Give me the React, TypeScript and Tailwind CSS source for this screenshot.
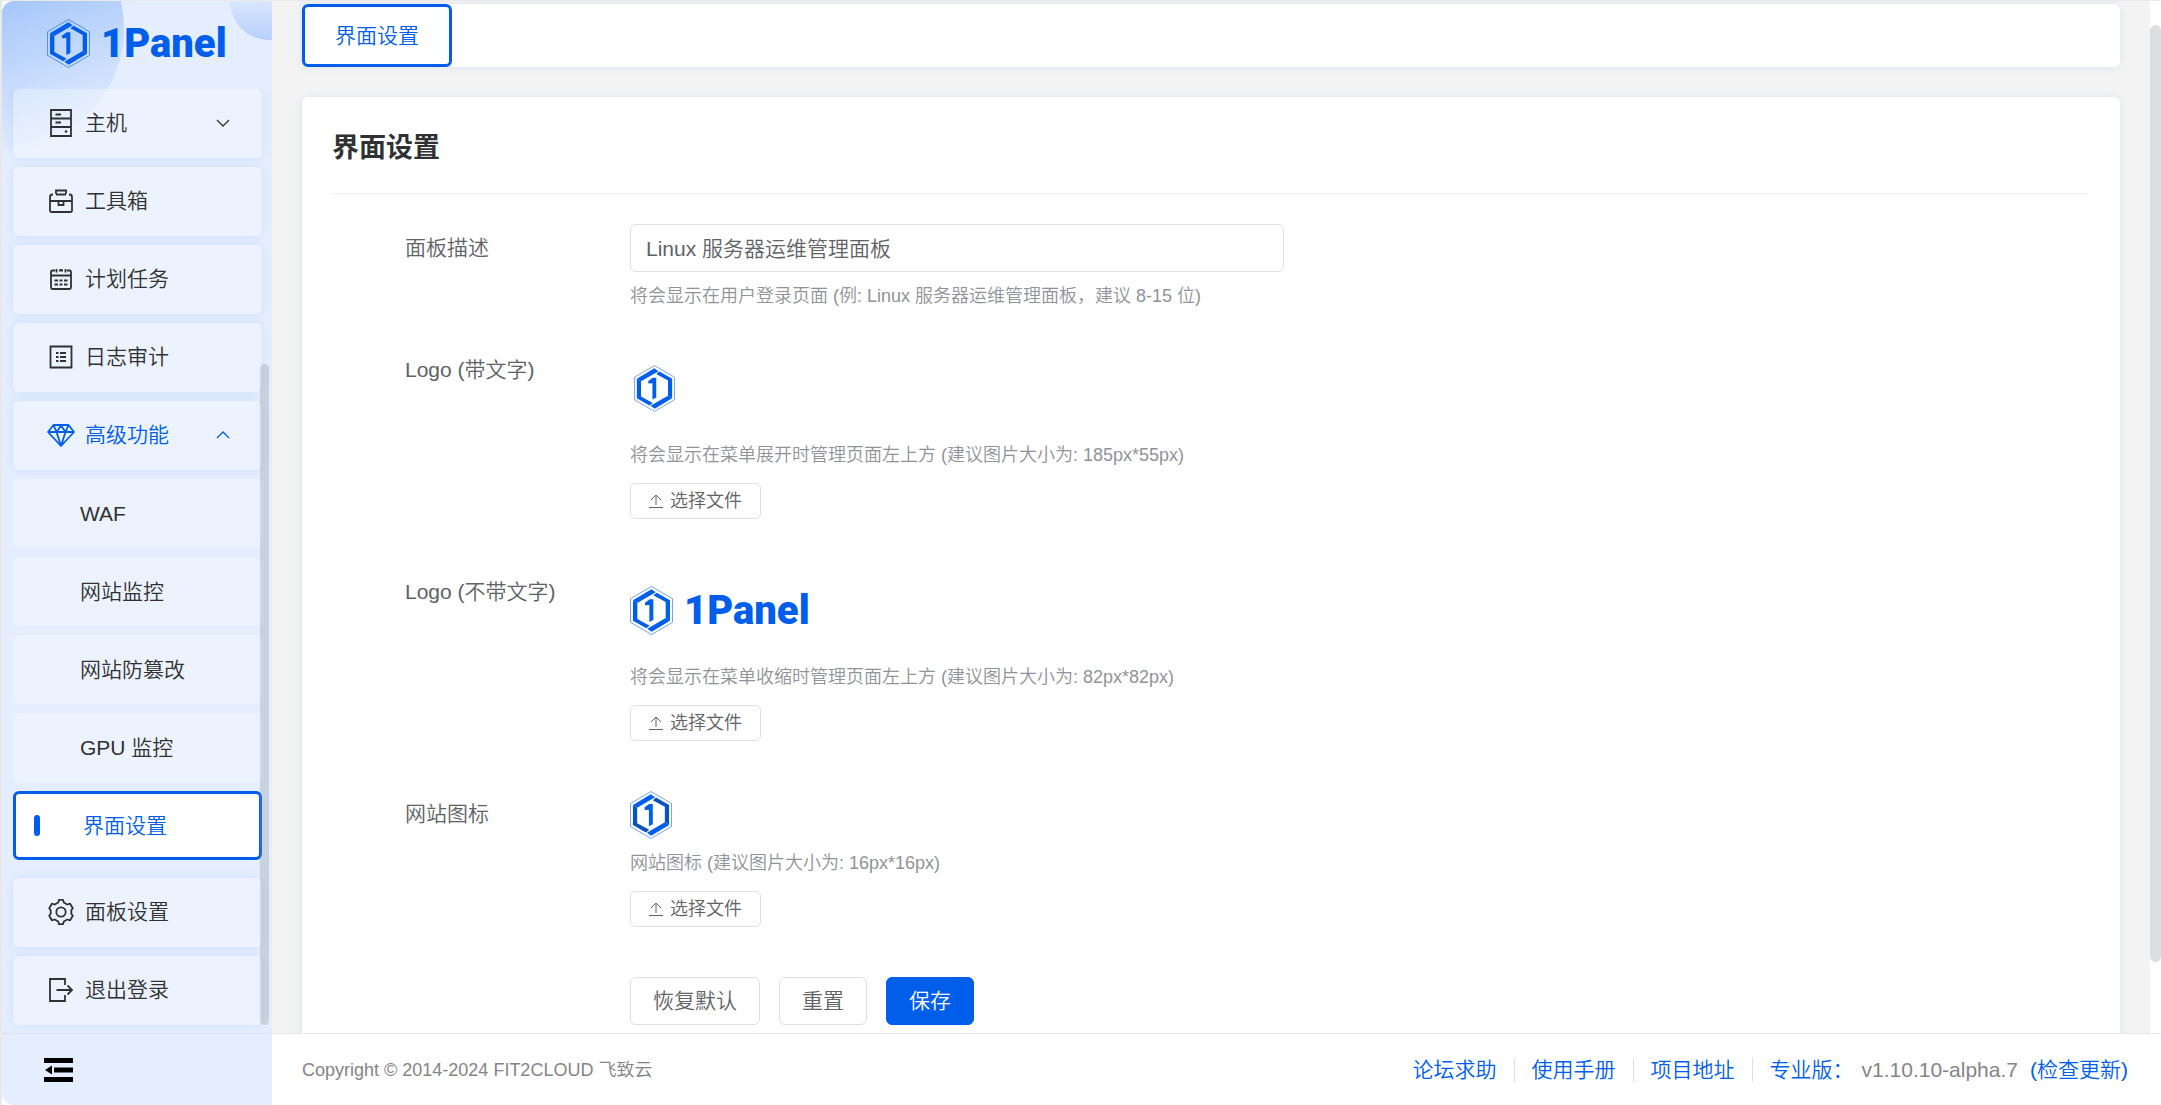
import { useRef, useState } from "react";
import type { ReactNode } from "react";


function Hexmark(props:{className:string, shaded?:boolean}){
    const dark = props.shaded ? "#0a53bd" : "#005eeb";
    return(
        <svg viewBox="0 0 129 147" className={props.className} aria-hidden="true">
            <path d="M64.5 1.5 127.5 38v71L64.5 145.500 1.500 109V38Z" fill="none" stroke="#005eeb" strokeOpacity="0.7" strokeWidth="2.400"/>
            <path d="M9 43v61l40 23 10-8-37-20V51Z" fill={dark}/>
            <path d="M9 43 64 10l13 9-55 32Z" fill="#005eeb"/>
            <path d="M120 104V43L80 20l-10 8 37 20v48Z" fill={dark}/>
            <path d="M120 104 65 137l-13-9 55-32Z" fill="#005eeb"/>
            <path d="M70 40v62l-12 6V57l-13 1v-8l14-10Z" fill="#005eeb"/>
        </svg>
    )
}

function Logo(){
    return(
        <div className="flex items-center gap-[11px] text-[#005eeb]">
            <Hexmark className="h-[49px] w-[43px] flex-none"/>
            <span className="font-['Roboto',sans-serif] text-[40px] leading-[49px] font-black">1Panel</span>
        </div>
    )
}

function Icon(props:{children:ReactNode}){
    return(
        <svg viewBox="0 0 28 28" className="h-7 w-7 flex-none" fill="none" stroke="currentColor" strokeWidth="1.800" aria-hidden="true">
            {props.children}
        </svg>
    )
}

const icons = {
    host: <Icon><path d="M4 1h20v26H4ZM4 9.500h20M4 18h20M8.500 5.500h5.500M8.500 13.500h5.500"/><circle cx="19" cy="22.500" r="1.300" fill="currentColor" stroke="none"/></Icon>,
    toolbox: <Icon><path d="M9 7V3.500h10V7M6 7.500H5.500a2.500 2.500 0 0 0-2.500 2.500v13.500a1.500 1.500 0 0 0 1.500 1.500h19a1.500 1.500 0 0 0 1.500-1.500V10a2.500 2.500 0 0 0-2.500-2.500H22M9 7.500h10M3 14h22M11.500 14v4h5v-4"/></Icon>,
    cron: <Icon><path d="M8 5.500H5.500a1.500 1.500 0 0 0-1.500 1.500v15.500a1.500 1.500 0 0 0 1.500 1.500h17a1.500 1.500 0 0 0 1.500-1.500V7a1.500 1.500 0 0 0-1.500-1.500H20M4 10.500h20M9.500 4v3.500M18.500 4v3.500M12 5.500h4M14 4v2"/><path d="M7.500 15.500h3.500M12.500 15.500h3M17 15.500h3.500M7.500 19.500h3.500M12.500 19.500h3M17 19.500h3.500"/></Icon>,
    log: <Icon><path d="M3.500 3.500h21v21h-21ZM9 10h2.500M9 14h2.500M9 18h2.500M13 10h6M13 14h6M13 18h6"/></Icon>,
    pro: <Icon><path d="M6.500 4h15l5.500 7L14 25 1 11ZM1 11h26M6.500 4l3 7L14 4.500 18.500 11l3-7M9.500 11 14 25l4.500-14" strokeLinejoin="round"/></Icon>,
    setting: <Icon><path d="M11.200 4.500 12 1.800h4l.8 2.700 3.400 2 2.900-.8 2.700 4.600-1.500 2v3.400l1.500 2-2.700 4.600-2.900-.8-3.400 2-.8 2.700h-4l-.8-2.700-3.400-2-2.900.8-2.700-4.600 1.500-2v-3.400l-1.500-2 2.700-4.600 2.900.8Z" strokeLinejoin="round"/><circle cx="14" cy="14" r="4.700"/></Icon>,
    logout: <Icon><path d="M18 9V3H3v22h15v-6M9.500 14H25M20.500 9.500 25 14l-4.500 4.500"/></Icon>,
};

function Arrow(props:{up?:boolean}){
    return(
        <svg viewBox="0 0 14 8" className="ml-auto h-2 w-[14px]" fill="none" stroke="currentColor" strokeWidth="1.300" aria-hidden="true">
            <path d={props.up ? "M1 7 7 1l6 6" : "M1 1l6 6 6-6"}/>
        </svg>
    )
}

const topmenu = [
    {name:"主机", icon:icons.host, arrow:"down"},
    {name:"工具箱", icon:icons.toolbox},
    {name:"计划任务", icon:icons.cron},
    {name:"日志审计", icon:icons.log},
    {name:"高级功能", icon:icons.pro, arrow:"up"},
];

const submenu = ["WAF", "网站监控", "网站防篡改", "GPU 监控", "界面设置"];

const bottommenu = [
    {name:"面板设置", icon:icons.setting},
    {name:"退出登录", icon:icons.logout},
];

function Menuitem(props:{name:string, icon:ReactNode, arrow?:string}){
    return(
        <a href="#" className={(props.arrow=="up" ? "text-[#005eeb] " : "text-[#303133] ")+"flex h-[69px] flex-none items-center gap-[10px] rounded-md bg-white/30 pr-8 pb-[2px] pl-[34px] shadow-[0_0_10px_rgba(0,94,235,0.1)]"}>
            {props.icon}
            {props.name}
            {props.arrow && <Arrow up={props.arrow=="up"}/>}
        </a>
    )
}

function Sidebar(){
    const [Selected,setSelected]=useState<string>("界面设置");

    return(
        <aside className="relative flex w-[270px] flex-none flex-col overflow-hidden bg-[#e5eefe]">
            <div className="absolute -top-[96px] -left-[124px] h-[246px] w-[246px] rounded-full bg-linear-160 from-[#a3c5fa] from-40% to-[#e3edfe] to-90%"></div>
            <div className="absolute -top-[38px] left-[228px] h-[77px] w-[77px] rounded-full bg-linear-to-b from-[#dfeafe] from-40% to-[#b8d0fa]"></div>

            <div className="relative flex h-[88px] flex-none items-center pb-[4px] pl-[45px]">
                <Logo/>
            </div>

            <nav className="relative flex min-h-0 flex-1 flex-col gap-[9px] overflow-hidden pr-[10px] pl-[11px]">
                {topmenu.map(item=>(
                    <Menuitem key={item.name} name={item.name} icon={item.icon} arrow={item.arrow}/>
                ))}
                {submenu.map(name=>(
                    <a href="#" key={name} onClick={()=>{setSelected(name);}}
                        className={(Selected==name ? "mb-[9px] border-3 border-[#005eeb] bg-white pl-[18px] text-[#005eeb] " : "bg-white/30 pl-[67px] text-[#303133] ")+"flex h-[69px] flex-none items-center rounded-md"}>
                        {Selected==name && <span className="mr-[43px] h-[21px] w-[6px] rounded-full bg-[#005eeb]"></span>}
                        {name}
                    </a>
                ))}
                {bottommenu.map(item=>(
                    <Menuitem key={item.name} name={item.name} icon={item.icon}/>
                ))}
                <div className="absolute right-[3px] bottom-2 h-[661px] w-[9px] rounded-full bg-[#909399]/30"></div>
            </nav>

            <div className="relative flex h-[72px] flex-none items-center border-t border-[#dde3ed] pl-[42px]">
                <button type="button" aria-label="收起菜单">
                    <svg viewBox="0 0 29 24" className="h-6 w-[29px]" fill="#000" aria-hidden="true">
                        <path d="M0 0h29v5H0ZM10 9.500h19v5H10ZM0 19h29v5H0ZM8 7.500v9L1 12Z"/>
                    </svg>
                </button>
            </div>
        </aside>
    )
}

function Help(props:{children:ReactNode}){
    return <p className="mt-3 text-[18px] leading-6 text-[#909399]">{props.children}</p>
}

function Upload(props:{label:string}){
    const inputRef = useRef<HTMLInputElement>(null!);

    return(
        <>
        <input ref={inputRef} hidden type="file" accept="image/*" aria-label={props.label}></input>
        <button type="button" onClick={()=>{inputRef.current.click();}}
            className="mt-4 flex h-9 w-[131px] items-center justify-center gap-[7px] rounded-[5px] border border-[#dcdfe6] text-[18px] text-[#606266]">
            <svg viewBox="0 0 14 14" className="h-[14px] w-[14px]" fill="none" stroke="currentColor" aria-hidden="true">
                <path d="M0 13.500h14M7 11V1M2 6l5-5 5 5"/>
            </svg>
            选择文件
        </button>
        </>
    )
}

function Row(props:{label:string, htmlFor?:string, className?:string, children:ReactNode}){
    return(
        <div className={"flex "+(props.className ?? "mb-[49px]")}>
            {props.htmlFor
                ? <label htmlFor={props.htmlFor} className="w-[225px] flex-none leading-[48px] text-[#606266]">{props.label}</label>
                : <div className="w-[225px] flex-none leading-[48px] text-[#606266]">{props.label}</div>}
            <div className="min-w-0 flex-1">{props.children}</div>
        </div>
    )
}

function Settingform(){
    const [Title,setTitle]=useState<string>("Linux 服务器运维管理面板");

    return(
        <form className="pt-[30px] pl-[73px]" onSubmit={(e)=>{e.preventDefault();}}>
            <Row label="面板描述" htmlFor="title" className="mb-[38px]">
                <input id="title" type="text" value={Title} onChange={(e)=>{setTitle(e.target.value);}}
                    className="block h-12 w-[654px] max-w-full rounded-md border border-[#dcdfe6] bg-white px-[15px] pb-[2px] text-[#606266]"></input>
                <Help>将会显示在用户登录页面 (例: Linux 服务器运维管理面板，建议 8-15 位)</Help>
            </Row>
            <Row label="Logo (带文字)">
                <div className="flex h-[85px] items-center pl-1"><Hexmark className="h-[47px] w-[41px]"/></div>
                <Help>将会显示在菜单展开时管理页面左上方 (建议图片大小为: 185px*55px)</Help>
                <Upload label="Logo (带文字)"/>
            </Row>
            <Row label="Logo (不带文字)">
                <div className="flex h-[85px] items-center"><Logo/></div>
                <Help>将会显示在菜单收缩时管理页面左上方 (建议图片大小为: 82px*82px)</Help>
                <Upload label="Logo (不带文字)"/>
            </Row>
            <Row label="网站图标" className="mb-[50px]">
                <div className="flex h-[49px] items-center"><Hexmark className="h-[48px] w-[42px]" shaded/></div>
                <Help>网站图标 (建议图片大小为: 16px*16px)</Help>
                <Upload label="网站图标"/>
            </Row>
            <Row label="" className="pb-8">
                <div className="flex gap-[19px]">
                    <button type="button" className="h-12 rounded-md border border-[#dcdfe6] px-[22px] text-[#606266]">恢复默认</button>
                    <button type="reset" className="h-12 rounded-md border border-[#dcdfe6] px-[22px] text-[#606266]">重置</button>
                    <button type="submit" className="h-12 rounded-md border border-[#005eeb] bg-[#005eeb] px-[22px] text-white">保存</button>
                </div>
            </Row>
        </form>
    )
}

function Footer(){
    return(
        <footer className="flex h-[72px] flex-none items-center justify-between border-t border-[#e4e7ed] bg-white pr-[33px] pl-[30px]">
            <div className="text-[18px] text-[#858585]">Copyright © 2014-2024 FIT2CLOUD 飞致云</div>
            <div className="flex items-center gap-[17px] text-[#005eeb]">
                <a href="#">论坛求助</a>
                <span className="h-6 w-px bg-[#dcdfe6]"></span>
                <a href="#">使用手册</a>
                <span className="h-6 w-px bg-[#dcdfe6]"></span>
                <a href="#">项目地址</a>
                <span className="h-6 w-px bg-[#dcdfe6]"></span>
                <div className="flex items-center">
                    <a href="#">专业版：</a>
                    <span className="mr-[12px] ml-2 text-[#858585]">v1.10.10-alpha.7</span>
                    <a href="#">(检查更新)</a>
                </div>
            </div>
        </footer>
    )
}

export default function App(){
    return(
        <div className="h-screen border-t border-l-2 border-[#e9e9e9] font-['Liberation_Sans','Noto_Sans_CJK_SC',sans-serif] text-[21px] leading-[30px] font-[350]">
            <div className="flex h-full overflow-hidden rounded-xl">
                <Sidebar/>
                <div className="flex min-w-0 flex-1 flex-col">
                    <div className="flex min-h-0 flex-1">
                        <main className="flex min-w-0 flex-1 flex-col gap-[30px] overflow-hidden bg-[#f3f3f3] px-[30px] pt-[3px]">
                            <div className="flex flex-none rounded-md bg-white shadow-[0_0_8px_rgba(0,94,235,0.1)]">
                                <button type="button" className="h-[63px] rounded-md border-3 border-[#005eeb] px-[30px] text-[#005eeb]">界面设置</button>
                            </div>
                            <section className="flex-none rounded-md bg-white px-[30px] shadow-[0_0_8px_rgba(0,94,235,0.1)]">
                                <h1 className="flex h-[97px] items-center border-b border-[#f2f2f2] pt-[5px] text-[27px] font-bold text-[#303133]">界面设置</h1>
                                <Settingform/>
                            </section>
                        </main>
                        <div className="w-[11px] flex-none bg-white pt-6">
                            <div className="h-[93%] rounded-full bg-[#dddee0]"></div>
                        </div>
                    </div>
                    <Footer/>
                </div>
            </div>
        </div>
    )
}
